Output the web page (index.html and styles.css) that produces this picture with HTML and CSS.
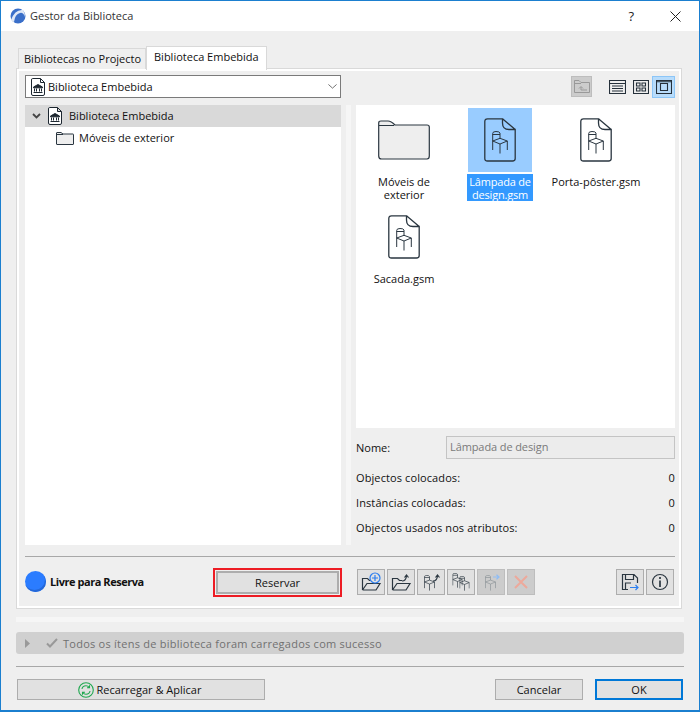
FILE: index.html
```html
<!DOCTYPE html>
<html lang="pt">
<head>
<meta charset="utf-8">
<title>Gestor da Biblioteca</title>
<link rel="stylesheet" href="styles.css">
</head>
<body>
<svg class="defs" width="0" height="0" aria-hidden="true">
  <symbol id="chair" viewBox="0 0 16 23">
    <path d="M.7 10V2.500Q.7 1.200 2 .9L4 .5Q7.500 .5 8 2V7.300M.7 3.500H8M.7 10L8 7.300L15.300 10L8 13ZM.7 10V19M15.300 10V19M8 13V22.500" fill="none" stroke="currentColor" stroke-width="1"/>
  </symbol>
  <symbol id="file" viewBox="0 0 32 44">
    <path d="M3.500 .8H18.500V5Q18.500 11.500 25 11.500H31.200V40.500Q31.200 43 28.500 43H3.500Q.8 43 .8 40.500V3.500Q.8 .8 3.500 .8ZM18.500 .8L31.200 11.500" fill="none" stroke="#2a3640" stroke-width="1.300"/>
  </symbol>
  <symbol id="libfile" viewBox="0 0 14 18">
    <path d="M1.500.5H9.500L13.500 4.500V16Q13.500 17.500 12 17.500H2Q.5 17.500 .5 16V2Q.5.500 1.500.5ZM9.500.5V4.500H13.500" fill="#fff" stroke="#1d2730"/>
    <path d="M7 6.500L11.500 9V9.800H2.500V9ZM3.500 10.500V13.500M5.500 10.500V13.500M8.500 10.500V13.500M10.500 10.500V13.500M2.500 14.500H11.500" fill="#1d2730" stroke="#1d2730"/>
  </symbol>
  <symbol id="folderopen" viewBox="0 0 24 20">
    <path d="M3.500 18V6.500H8.500L10.500 8.500H13M3.500 18H17L21 11.500H8L3.500 18" fill="none" stroke="#2a3640" stroke-width="1.200"/>
  </symbol>
</svg>
<div class="window">
  <header class="titlebar">
    <svg class="logo" width="16" height="16" viewBox="0 0 16 16">
      <circle cx="8" cy="8" r="7.500" fill="#3a6fc9"/>
      <path d="M1 12Q5 1 13 2Q15.500 5 15 9Q13 4 10 5Q5 6 4 14Q2 14 1 12" fill="#dfe8f6"/>
    </svg>
    <span class="title">Gestor da Biblioteca</span>
    <span class="help">?</span>
    <svg class="close" width="11" height="11" viewBox="0 0 11 11"><path d="M.5.500L10.500 10.500M10.500.500L.5 10.500" stroke="#222" stroke-width="1"/></svg>
  </header>
  <main class="content">
    <nav class="tabs">
      <span class="tab">Bibliotecas no Projecto</span>
      <span class="tab active">Biblioteca Embebida</span>
    </nav>
    <section class="panel">
      <div class="columns">
        <div class="left">
          <div class="select">
            <svg class="i14" width="14" height="18"><use href="#libfile"/></svg>
            <span class="grow">Biblioteca Embebida</span>
            <svg width="9" height="5" viewBox="0 0 11 6"><path d="M.5.500L5.500 5L10.500.500" fill="none" stroke="#555"/></svg>
          </div>
          <div class="tree">
            <div class="row selected">
              <svg class="twist" width="9" height="6" viewBox="0 0 9 6"><path d="M1 1L4.500 4.500L8 1" fill="none" stroke="#444" stroke-width="1.800"/></svg>
              <svg width="14" height="18"><use href="#libfile"/></svg>
              <span>Biblioteca Embebida</span>
            </div>
            <div class="row sub">
              <svg width="18" height="13" viewBox="0 0 18 13"><path d="M.5 2V1Q.5.500 1 .5H5L7 2H17Q17.500 2 17.500 2.500V12Q17.500 12.500 17 12.500H1Q.5 12.500 .5 12ZM.5 2.500H7" fill="#eee" stroke="#2a3640"/></svg>
              <span>Móveis de exterior</span>
            </div>
          </div>
        </div>
        <div class="splitter"></div>
        <div class="right">
          <div class="viewbar">
            <span class="upbtn">
              <svg width="16" height="13" viewBox="0 0 16 13"><path d="M.5 12.500V.5H5L7 2.500H15.500V12.500ZM.5 3.500H7M5 8.500L7 6.500L9 8.500M7 7V10H13" fill="none" stroke="#999"/></svg>
            </span>
            <span class="viewbtn"><svg width="17" height="14" viewBox="0 0 17 14"><path d="M.5.5H16.500V13.500H.5ZM.5 3.500H16.500M3 6H14M3 8.500H14M3 11H14" fill="none" stroke="#25303a" stroke-width="1.100"/></svg></span>
            <span class="viewbtn"><svg width="16" height="14" viewBox="0 0 16 14"><path d="M.5.5H15.500V13.500H.5ZM3.500 3H7V6H3.500ZM9 3H12.500V6H9ZM3.500 8H7V11H3.500ZM9 8H12.500V11H9Z" fill="none" stroke="#25303a" stroke-width="1.100"/></svg></span>
            <span class="viewbtn on"><svg width="16" height="14" viewBox="0 0 16 14"><path d="M.5.5H15.500V13.500H.5ZM.5 1.800H15.500M4.500 3.500H11.500V10.500H4.500Z" fill="none" stroke="#25303a" stroke-width="1.100"/></svg></span>
          </div>
          <div class="files">
            <figure class="item">
              <span class="thumb"><svg width="52" height="40" viewBox="0 0 52 40"><path d="M.7 6V3Q.7 1 3 1H10Q13 1 17 5H49Q51.300 5 51.300 7V36Q51.300 39 49 39H3.500Q.7 39 .7 36ZM.7 5.500H16" fill="#eee" stroke="#2a3640" stroke-width="1.200"/></svg></span>
              <figcaption>Móveis de exterior</figcaption>
            </figure>
            <figure class="item sel">
              <span class="thumb"><span class="doc"><svg width="32" height="44"><use href="#file"/></svg><svg class="chair" width="16" height="23"><use href="#chair"/></svg></span></span>
              <figcaption>Lâmpada de design.gsm</figcaption>
            </figure>
            <figure class="item">
              <span class="thumb"><span class="doc"><svg width="32" height="44"><use href="#file"/></svg><svg class="chair" width="16" height="23"><use href="#chair"/></svg></span></span>
              <figcaption>Porta-pôster.gsm</figcaption>
            </figure>
            <figure class="item">
              <span class="thumb"><span class="doc"><svg width="32" height="44"><use href="#file"/></svg><svg class="chair" width="16" height="23"><use href="#chair"/></svg></span></span>
              <figcaption>Sacada.gsm</figcaption>
            </figure>
          </div>
          <div class="name-row">
            <label>Nome:</label>
            <span class="field">Lâmpada de design</span>
          </div>
          <dl class="stats">
            <div><dt>Objectos colocados:</dt><dd>0</dd></div>
            <div><dt>Instâncias colocadas:</dt><dd>0</dd></div>
            <div><dt>Objectos usados nos atributos:</dt><dd>0</dd></div>
          </dl>
        </div>
      </div>
      <div class="actions">
        <span class="dot"></span>
        <strong class="free">Livre para Reserva</strong>
        <span class="reserve-wrap"><button class="btn reserve">Reservar</button></span>
        <div class="tools">
          <span class="tool"><svg width="24" height="20" viewBox="0 0 24 20"><use href="#folderopen"/><circle cx="16" cy="6" r="5" fill="#e1e1e1" stroke="#2d7ff0" stroke-width="1.200"/><path d="M13 6H19M16 3V9" stroke="#2d7ff0" stroke-width="1.200"/></svg></span>
          <span class="tool"><svg width="24" height="20" viewBox="0 0 24 20"><use href="#folderopen"/><path d="M13 9Q17 9 17.500 4M15.500 5.500L17.500 3L19.500 5.500" fill="none" stroke="#2a3640" stroke-width="1.200"/></svg></span>
          <span class="tool"><svg width="24" height="20" viewBox="0 0 24 20"><svg x="5" y="3" width="11" height="16" viewBox="0 0 16 23" color="#2a3640"><use href="#chair"/></svg><path d="M14 9Q18 9 18.500 4M16.500 5.500L18.500 3L20.500 5.500" fill="none" stroke="#2a3640" stroke-width="1.200"/></svg></span>
          <span class="tool"><svg width="24" height="20" viewBox="0 0 24 20"><svg x="3" y="1" width="11" height="15" viewBox="0 0 16 23" color="#2a3640"><use href="#chair"/></svg><svg x="10" y="4" width="11" height="15" viewBox="0 0 16 23" color="#2a3640"><use href="#chair"/></svg></svg></span>
          <span class="tool off"><svg width="24" height="20" viewBox="0 0 24 20"><svg x="6" y="3" width="11" height="16" viewBox="0 0 16 23" color="#8d9499"><use href="#chair"/></svg><path d="M14 5H20M17.500 2.800L20 5L17.500 7.200" fill="none" stroke="#8fbdf5" stroke-width="1.200"/></svg></span>
          <span class="tool off"><svg width="14" height="14" viewBox="0 0 14 14"><path d="M1 1L13 13M13 1L1 13" stroke="#eda99b" stroke-width="2"/></svg></span>
          <span class="spacer"></span>
          <span class="tool"><svg width="18" height="18" viewBox="0 0 18 18"><path d="M7 16.500H1.500V1.500H13L16.500 5V10M4.500 1.500V6.500H12.500V1.500M4.500 16.500V10H10" fill="none" stroke="#2a3640" stroke-width="1.200"/><path d="M9 14.500H17M14.500 12L17 14.500L14.500 17" fill="none" stroke="#2d7ff0" stroke-width="1.200"/></svg></span>
          <span class="tool"><svg width="18" height="18" viewBox="0 0 18 18"><circle cx="9" cy="9" r="7.500" fill="none" stroke="#2a3640" stroke-width="1.200"/><path d="M9 7.500V14M9 4V6" stroke="#2a3640" stroke-width="1.700"/></svg></span>
        </div>
      </div>
    </section>
    <div class="strip"></div>
    <div class="status">
      <svg width="5" height="9" viewBox="0 0 5 9"><path d="M0 0L5 4.500L0 9Z" fill="#999"/></svg>
      <svg class="check" width="12" height="10" viewBox="0 0 12 10"><path d="M1 5.500L4 8.500L11 1" fill="none" stroke="#999" stroke-width="2"/></svg>
      <span class="status-text">Todos os ítens de biblioteca foram carregados com sucesso</span>
    </div>
    <footer class="footer">
      <button class="btn reload">
        <svg width="16" height="16" viewBox="0 0 16 16"><circle cx="8" cy="8" r="7.300" fill="none" stroke="#1fa84f" stroke-width="1.100"/><path d="M4 7Q4.500 3.800 8 3.800Q10 3.800 11 5.300M11.500 3.200V5.800H9M12 9Q11.500 12.200 8 12.200Q6 12.200 5 10.700M4.500 12.800V10.200H7" fill="none" stroke="#1fa84f" stroke-width="1.100"/></svg>
        Recarregar &amp; Aplicar
      </button>
      <button class="btn cancel">Cancelar</button>
      <button class="btn ok">OK</button>
    </footer>
  </main>
</div>
</body>
</html>
```
FILE: styles.css
```css
* { box-sizing: border-box; }
html, body { margin: 0; padding: 0; }
body { width: 700px; height: 712px; overflow: hidden; font: 11px/14px "Open Sans", "Noto Sans", sans-serif; color: #111; }
.defs { position: absolute; }
svg { display: block; flex: none; }
.window { width: 700px; height: 712px; border: 1px solid #1b7fcf; border-width: 1px 1px 2px 1px; display: flex; flex-direction: column; background: #efefef; }
.titlebar { height: 30px; background: #fff; display: flex; align-items: center; padding: 0 18px 0 9px; flex: none; }
.logo { margin-right: 4px; }
.title { flex: 1; color: #333; }
.help { font-size: 13px; margin-right: 36px; color: #222; }
.content { flex: 1; display: flex; flex-direction: column; padding: 15px 15px 0; }
.tabs { display: flex; align-items: flex-end; height: 23px; padding-left: 2px; margin-bottom: -1px; position: relative; z-index: 1; white-space: nowrap; flex: none; }
.tab { height: 21px; width: 128px; background: #efefef; border: 1px solid #d9d9d9; border-bottom: 0; padding: 3px 0 0 5px; }
.tab.active { height: 24px; width: 121px; background: #fff; border: 1px solid #d9d9d9; border-bottom: 0; padding: 3px 0 0 7px; margin-bottom: -1px; }
.panel { width: 666px; height: 541px; flex: none; border: 1px solid #d9d9d9; box-shadow: inset 0 0 0 2px #fff; padding: 6px 6px 0 8px; display: flex; flex-direction: column; }
.columns { display: flex; height: 470px; flex: none; }
.left { width: 316px; flex: none; display: flex; flex-direction: column; }
.splitter { width: 5px; height: 440px; margin: 30px 5px 0; background: #f6f6f6; flex: none; }
.select { height: 23px; border: 1px solid #7a7a7a; background: #fff; display: flex; align-items: center; gap: 3px; padding: 0 3px 0 5px; flex: none; }
.grow { flex: 1; }
.tree { margin-top: 7px; height: 440px; background: #fff; }
.row { height: 22px; display: flex; align-items: center; }
.row.selected { background: #d9d9d9; padding-left: 7px; }
.twist { margin-right: 7px; }
.row.selected svg + svg { margin-right: 7px; }
.row.sub { padding-left: 31px; gap: 5px; }
.right { width: 319px; flex: none; display: flex; flex-direction: column; }
.viewbar { height: 23px; display: flex; align-items: center; justify-content: flex-end; flex: none; }
.upbtn { width: 21px; height: 21px; background: #ccc; border: 1px solid #bdbdbd; display: flex; align-items: center; justify-content: center; margin-right: 14px; }
.viewbtn { width: 23px; height: 22px; display: flex; align-items: center; justify-content: center; border: 1px solid transparent; }
.viewbtn.on { background: #b8dcfb; border-color: #8cc6f8; }
.files { margin-top: 7px; height: 323px; flex: none; background: #fff; display: grid; grid-template-columns: repeat(3, 96px); grid-auto-rows: 97px; align-content: start; padding-top: 3px; }
.item { margin: 0; display: flex; flex-direction: column; align-items: center; }
.thumb { width: 64px; height: 64px; display: flex; align-items: center; justify-content: center; flex: none; }
.doc { position: relative; display: block; width: 32px; height: 44px; }
.chair { position: absolute; left: 8px; top: 13px; color: #2a3640; }
figcaption { margin-top: 2px; text-align: center; width: 94px; line-height: 13px; padding: 1px 0 0; }
.item:first-child figcaption { width: 70px; }
.item.sel .thumb { background: #99ccff; }
.item.sel figcaption { background: #3399ff; color: #fff; width: 66px; letter-spacing: -.2px; }
.name-row { height: 23px; margin-top: 8px; display: flex; align-items: center; flex: none; }
.name-row label { width: 90px; }
.field { flex: 1; height: 23px; border: 1px solid #c4c4c4; background: #ececec; color: #7a7a7a; padding: 3px; letter-spacing: -.1px; }
.stats { margin: 6px 0 0; letter-spacing: .1px; }
.stats div { height: 25px; display: flex; align-items: center; justify-content: space-between; }
.stats dd { margin: 0; }
.actions { margin-top: 11px; border-top: 1px solid #a8a8a8; display: flex; align-items: center; height: 52px; flex: none; }
.dot { width: 21px; height: 21px; border-radius: 50%; background: #2b7cff; box-shadow: inset -1px -2px 0 #2468d8; margin-right: 4px; margin-bottom: 2px; flex: none; }
.free { width: 163px; flex: none; font-weight: 700; letter-spacing: -.45px; margin-bottom: 2px; }
.btn { font: inherit; color: #111; background: #e1e1e1; border: 1px solid #adadad; padding: 0; border-radius: 0; }
.reserve-wrap { width: 129px; height: 29px; border: 2px solid #ed1c24; padding: 1px; flex: none; }
.reserve { display: block; width: 100%; height: 100%; border-width: 2px; }
.tools { margin-left: 15px; flex: 1; display: flex; gap: 2px; margin-bottom: 1px; }
.tool { width: 28px; height: 26px; background: #e1e1e1; border: 1px solid #adadad; display: flex; align-items: center; justify-content: center; flex: none; }
.tool.off { background: #ccc; border-color: #bdbdbd; }
.spacer { width: 77px; flex: none; }
.strip { width: 668px; height: 5px; background: #f6f6f6; margin-top: 8px; flex: none; }
.status { width: 668px; height: 22px; margin-top: 10px; background: #d0d0d0; border-radius: 3px; display: flex; align-items: center; padding-left: 9px; color: #707070; flex: none; letter-spacing: .25px; }
.status-text { padding-top: 1px; }
.check { margin: 0 5px 0 16px; }
.footer { width: 668px; margin-top: 12px; border-top: 1px solid #a8a8a8; padding: 12px 1px 0; display: flex; align-items: flex-start; flex: none; }
.reload { width: 248px; height: 21px; display: flex; align-items: center; justify-content: center; gap: 3px; margin-right: 230px; padding-right: 3px; }
.cancel { width: 88px; height: 21px; margin-right: 12px; }
.ok { width: 88px; height: 21px; border: 2px solid #0078d7; }
```
